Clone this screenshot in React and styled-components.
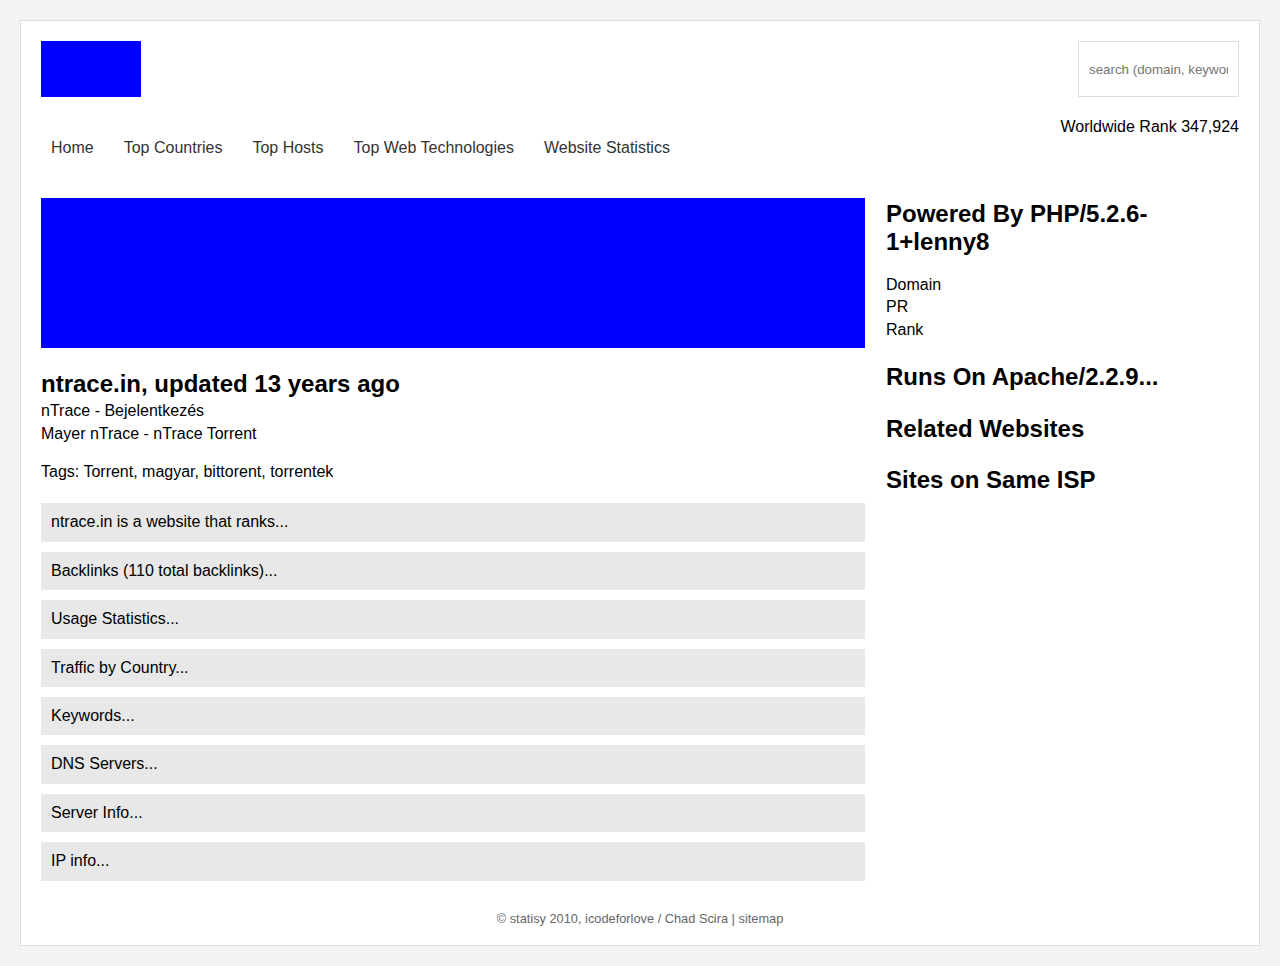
import React from "react";
import styled, { createGlobalStyle } from "styled-components";

const GlobalStyle = createGlobalStyle`
  body {
    margin: 0;
    background: #f3f3f3;
    font-family: "Liberation Sans", Arial, sans-serif;
    color: #000;
  }
`;

const Page = styled.div`
  margin: 20px;
  background: #fff;
  border: 1px solid #ddd;
  padding: 20px;
  box-sizing: border-box;
  height: 926px;
`;

const Header = styled.div`
  display: flex;
  justify-content: space-between;
  align-items: flex-start;
`;

const Logo = styled.div`
  width: 100px;
  height: 56px;
  background: #0000ff;
`;

const Search = styled.input`
  width: 161px;
  height: 56px;
  box-sizing: border-box;
  border: 1px solid #ddd;
  padding: 0 10px;
  font-family: "Liberation Sans", Arial, sans-serif;
  font-size: 13.33px;
  outline: none;
  &::placeholder {
    color: #757575;
  }
`;

const NavRow = styled.div`
  display: flex;
  justify-content: space-between;
  align-items: flex-start;
  margin-top: 19px;
`;

const Nav = styled.nav`
  display: flex;
  margin-top: 11px;
`;

const NavItem = styled.a`
  padding: 10px;
  margin-right: 10px;
  font-size: 16px;
  line-height: 22.4px;
  color: #333;
  text-decoration: none;
`;

const Rank = styled.div`
  font-size: 16px;
  line-height: 22px;
`;

const Main = styled.div`
  display: grid;
  grid-template-columns: 824px 1fr;
  column-gap: 21px;
  margin-top: 29px;
`;

const Banner = styled.div`
  height: 150px;
  background: #0000ff;
`;

const Title = styled.h2`
  margin: 22px 0 1px;
  font-size: 24px;
  line-height: 27.6px;
  font-weight: bold;
`;

const Text = styled.div`
  font-size: 16px;
  line-height: ${(p) => p.$lh || 22.4}px;
  margin-top: ${(p) => p.$mt || 0}px;
`;

const Boxes = styled.div`
  display: flex;
  flex-direction: column;
  gap: 10px;
  margin-top: 20px;
`;

const Box = styled.div`
  background: #e8e8e8;
  padding: 8px 10px;
  font-size: 16px;
  line-height: 22.4px;
`;

const Side = styled.aside`
  padding-top: 2px;
`;

const SideTitle = styled.h2`
  margin: ${(p) => p.$mt || 0}px 0 0;
  font-size: 24px;
  line-height: 27.6px;
  font-weight: bold;
  padding-right: 40px;
`;

const Footer = styled.div`
  text-align: center;
  font-size: 12.8px;
  line-height: 16px;
  color: #666;
  margin-top: 30px;
`;

const boxes = [
  "ntrace.in is a website that ranks...",
  "Backlinks (110 total backlinks)...",
  "Usage Statistics...",
  "Traffic by Country...",
  "Keywords...",
  "DNS Servers...",
  "Server Info...",
  "IP info...",
];

export default function App() {
  return (
    <>
      <GlobalStyle />
      <Page>
        <Header>
          <Logo />
          <Search placeholder="search (domain, keyword)" />
        </Header>
        <NavRow>
          <Nav>
            <NavItem href="#">Home</NavItem>
            <NavItem href="#">Top Countries</NavItem>
            <NavItem href="#">Top Hosts</NavItem>
            <NavItem href="#">Top Web Technologies</NavItem>
            <NavItem href="#">Website Statistics</NavItem>
          </Nav>
          <Rank>Worldwide Rank 347,924</Rank>
        </NavRow>
        <Main>
          <div>
            <Banner />
            <Title>ntrace.in, updated 13 years ago</Title>
            <Text $lh={23}>nTrace - Bejelentkezés</Text>
            <Text $lh={23}>Mayer nTrace - nTrace Torrent</Text>
            <Text $mt={16}>Tags: Torrent, magyar, bittorent, torrentek</Text>
            <Boxes>
              {boxes.map((b) => (
                <Box key={b}>{b}</Box>
              ))}
            </Boxes>
          </div>
          <Side>
            <SideTitle>Powered By PHP/5.2.6-1+lenny8</SideTitle>
            <Text $mt={18} $lh={22.5}>Domain</Text>
            <Text $lh={22.5}>PR</Text>
            <Text $lh={22.5}>Rank</Text>
            <SideTitle $mt={22}>Runs On Apache/2.2.9...</SideTitle>
            <SideTitle $mt={24}>Related Websites</SideTitle>
            <SideTitle $mt={24}>Sites on Same ISP</SideTitle>
          </Side>
        </Main>
        <Footer>© statisy 2010, icodeforlove / Chad Scira | sitemap</Footer>
      </Page>
    </>
  );
}
